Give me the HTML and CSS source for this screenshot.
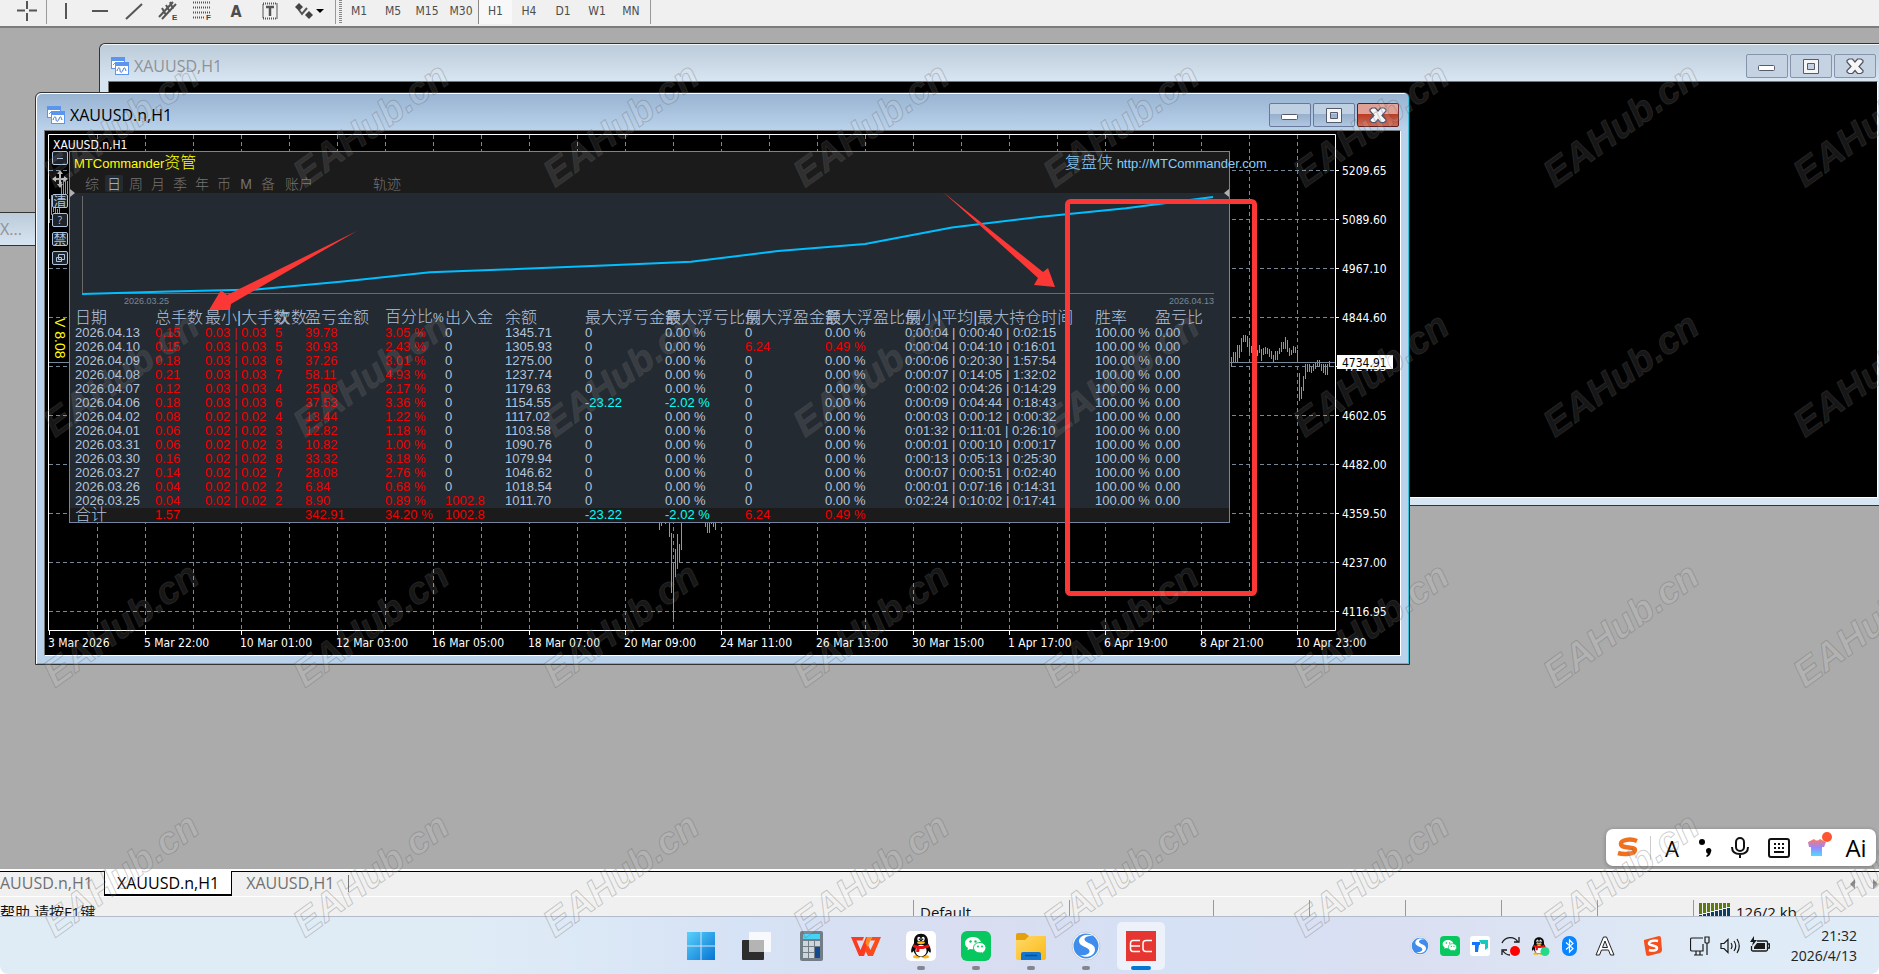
FILE: index.html
```html
<!DOCTYPE html>
<html lang="zh-CN">
<head>
    <meta charset="UTF-8">
    <meta name="viewport" content="width=device-width, initial-scale=1.0">
    <title>XAUUSD.n,H1</title>
    <link rel="stylesheet" href="styles.css">
</head>
<body>
    <svg width="0" height="0" class="defs">
        <defs>
            <symbol id="i-chart" viewBox="0 0 18 18">
                <rect x="0" y="0" width="14" height="12" fill="#5b95ee"/><rect x="1" y="4" width="12" height="7" fill="#fff"/>
                <path d="M2 8l2-2 2 2 2-2" fill="none" stroke="#5b95ee"/>
                <rect x="4" y="5" width="14" height="13" fill="#5b95ee"/><rect x="5" y="9" width="12" height="8" fill="#fff"/>
                <path d="M6 14c1-4 3-4 3-1s2 3 3 0 2-3 3 1" fill="none" stroke="#3b73c8"/>
            </symbol>
            <symbol id="i-min" viewBox="0 0 20 18"><rect x="1.500" y="8.500" width="16" height="5" rx="1" fill="#fff" stroke="#555b6d"/></symbol>
            <symbol id="i-max" viewBox="0 0 20 18"><path d="M2.500 2.500h15v14h-15z M6.500 6.500v6h7v-6z" fill="#f6f6f6" stroke="#555b6d" fill-rule="evenodd"/></symbol>
            <symbol id="i-close" viewBox="0 0 20 18"><path d="M2 3.500L4 2h3.500L10 5l2.500-3H16l2 1.500v1.500L14 9.500l4 4V15l-2 1.500h-3.500L10 13.500l-2.500 3H4L2 15v-1.500l4-4L2 5z" fill="#f6f6f6" stroke="#4d5265" stroke-width="1.200"/></symbol>
            <symbol id="i-wechat" viewBox="0 0 30 30">
                <rect width="30" height="30" rx="6" fill="#07c75f"/>
                <path d="M12 6c-4.500 0-8 2.700-8 6.200 0 2 1.200 3.700 3 4.800l-.6 2.200 2.700-1.300c4 1 11-.5 11-5.700C20 8.700 16.500 6 12 6z" fill="#fff"/>
                <path d="M19 11.500c-3.800 0-6.500 2.300-6.500 5.200 0 3.500 4 5.900 8.300 5l2.200 1.300-.5-2c1.600-1 2.500-2.500 2.500-4.300 0-2.900-2.600-5.200-6-5.200z" fill="#fff" stroke="#07c75f"/>
                <g fill="#07c75f"><circle cx="9.500" cy="10.500" r="1.200"/><circle cx="14.500" cy="10.500" r="1.200"/><circle cx="17" cy="15.500" r="1"/><circle cx="21" cy="15.500" r="1"/></g>
            </symbol>
            <symbol id="i-qq" viewBox="0 0 30 30">
                <ellipse cx="10.500" cy="26.500" rx="4" ry="1.800" fill="#fdb515"/><ellipse cx="19.500" cy="26.500" rx="4" ry="1.800" fill="#fdb515"/>
                <path d="M15 2c-5 0-7.500 3.500-7.500 8v2C5.500 15 4 18.500 4.500 21.500c.5 1.500 2-.5 2.500-1.500 1 4 4 6.500 8 6.500s7-2.500 8-6.500c.5 1 2 3 2.500 1.500.5-3-1-6.500-3-9.500v-2C22.500 5.500 20 2 15 2z" fill="#0b0b0b"/>
                <ellipse cx="15" cy="20" rx="6" ry="6.300" fill="#fff"/>
                <ellipse cx="12.700" cy="7.500" rx="1.700" ry="2.300" fill="#fff"/><ellipse cx="17.300" cy="7.500" rx="1.700" ry="2.300" fill="#fff"/>
                <circle cx="13.200" cy="7.800" r=".8"/><circle cx="16.800" cy="7.800" r=".8"/>
                <ellipse cx="15" cy="11.500" rx="4.200" ry="1.500" fill="#fdb515"/>
                <path d="M7 13c5 2.500 11 2.500 16 0l.8 3c-3.500 1.800-7 2.300-10.300 2.100l-.5 3.400H9.800l.3-4.100c-1.500-.4-2.800-.8-3.800-1.400z" fill="#e81010"/>
            </symbol>
            <symbol id="i-swirl" viewBox="0 0 30 30">
                <circle cx="15" cy="15" r="14" fill="#fff" stroke="#c7cbd5"/>
                <circle cx="15" cy="15" r="12.500" fill="#3e8cec"/>
                <path d="M22 5c-7-3.500-14.500.5-14 5.500.5 5.500 10 5 10.500 9.500.2 3-4.500 5-9.500 4 6 4 15 1 15-5.500C24 12 14 12.500 13.500 8.500 13.300 6 17 4.500 22 5z" fill="#fff"/>
            </symbol>
            <linearGradient id="g-win" x1="0" y1="0" x2="1" y2="1"><stop offset="0" stop-color="#5ad1fb"/><stop offset="1" stop-color="#0674d4"/></linearGradient>
            <linearGradient id="g-folder" x1="0" y1="0" x2="1" y2="1"><stop offset="0" stop-color="#ffd969"/><stop offset="1" stop-color="#fbb915"/></linearGradient>
            <linearGradient id="g-shirt" x1="0" y1="0" x2="0" y2="1"><stop offset="0" stop-color="#ff7a5c"/><stop offset=".5" stop-color="#9a86ff"/><stop offset="1" stop-color="#4fdcff"/></linearGradient>
        </defs>
    </svg>

    <header class="toolbar">
        <button class="tool" aria-label="crosshair"><svg width="20" height="20"><path d="M10 0v8M10 12v8M0 9.500h8M12 9.500h8"/></svg></button>
        <span class="split"></span>
        <button class="tool" aria-label="vertical line"><svg width="20" height="20"><path d="M10 2v16"/></svg></button>
        <button class="tool" aria-label="horizontal line"><svg width="20" height="20"><path d="M2 10h16"/></svg></button>
        <button class="tool" aria-label="trendline"><svg width="20" height="20"><path d="M2 18L18 3"/></svg></button>
        <button class="tool" aria-label="channel"><svg width="20" height="20"><path d="M1 16L15 1M4 18L18 3M4 7l4 7M8 4l4 7M12 1l3 7"/><text x="14" y="19">E</text></svg></button>
        <button class="tool" aria-label="fibonacci"><svg width="20" height="20"><path d="M1 1.500h17M1 6.500h17M1 11.500h17M1 16.500h11" stroke-dasharray="1 1"/><text x="14" y="19">F</text></svg></button>
        <button class="tool letter" aria-label="text">A</button>
        <button class="tool" aria-label="text label"><svg width="20" height="20"><rect x="3" y="2.500" width="14" height="15" stroke-dasharray="1 1"/><path d="M6 6h8M10 6v9" stroke-width="2.500"/></svg></button>
        <button class="tool wide" aria-label="arrows"><svg width="32" height="20"><path d="M1 6l4-4 4 4-4 4zM11 14l4-4 4 4-4 4z" fill="#444" stroke="none"/><path d="M5 9l3 4 5-6"/><path d="M22 8h8l-4 4z" fill="#000" stroke="none"/></svg></button>
        <span class="split"></span>
        <span class="grip"></span>
        <nav class="periods">
            <button>M1</button><button>M5</button><button>M15</button><button>M30</button><button class="on">H1</button><button>H4</button><button>D1</button><button>W1</button><button>MN</button>
        </nav>
        <span class="split"></span>
    </header>

    <main class="workspace">
        <section class="window stub"><div class="titlebar"><span>X...</span></div></section>

        <section class="window back">
            <div class="titlebar">
                <svg class="app-icon"><use href="#i-chart"/></svg>
                <h2>XAUUSD,H1</h2>
                <button class="ctl" aria-label="minimize"><svg><use href="#i-min"/></svg></button>
                <button class="ctl" aria-label="maximize"><svg><use href="#i-max"/></svg></button>
                <button class="ctl" aria-label="close"><svg><use href="#i-close"/></svg></button>
            </div>
            <div class="client"></div>
        </section>

        <section class="window front">
            <div class="titlebar">
                <svg class="app-icon"><use href="#i-chart"/></svg>
                <h2>XAUUSD.n,H1</h2>
                <button class="ctl" aria-label="minimize"><svg><use href="#i-min"/></svg></button>
                <button class="ctl" aria-label="maximize"><svg><use href="#i-max"/></svg></button>
                <button class="ctl close" aria-label="close"><svg><use href="#i-close"/></svg></button>
            </div>
            <div class="client">
                <svg class="chart" viewBox="45 131 1355 524" id="chart">
                    <g id="grid" class="grid"></g>
                    <path id="bars" class="bars"/>
                    <path d="M49 362.500H1336" class="price-line"/>
                    <path d="M48.500 630.500V134.500H1335.500V630.500Z" class="frame"/>
                    <g id="axis" class="axis"></g>
                    <text x="53" y="149" class="axis">XAUUSD.n,H1</text>
                </svg>

                <div class="side">
                    <button aria-label="collapse"><svg width="14" height="12"><path d="M4 6.500h6"/></svg></button>
                    <span class="move"><svg width="16" height="18"><path d="M8 0l3 4H5zM8 18l3-4H5zM0 9l4-3v6zM16 9l-4-3v6z" fill="#bbb"/><path d="M8 3v12M3 9h10" stroke="#bbb" stroke-width="2"/></svg></span>
                    <button>清</button>
                    <button class="q">?</button>
                    <button>禁</button>
                    <button aria-label="windows"><svg width="14" height="12"><path d="M5.500 2.500h6v5h-6zM3.500 5.500h5v4h-5z"/></svg></button>
                </div>
                <span class="version">V 8.08</span>

                <div class="panel">
                    <div class="panel-head">
                        <div class="panel-title">
                            <strong>MTCommander<i>资管</i></strong>
                            <span class="brand"><i>复盘侠</i> <a href="#">http://MTCommander.com</a></span>
                        </div>
                        <nav class="panel-tabs">
                            <button>综</button><button class="on">日</button><button>周</button><button>月</button><button>季</button><button>年</button><button>币</button><button>M</button><button>备</button><button class="two">账户</button><button class="two track">轨迹</button>
                        </nav>
                    </div>
                    <svg class="equity" viewBox="70 193 1159 116">
                        <path d="M82.500 196V293.500H1214" class="eq-axis"/>
                        <path id="curve" class="curve"/>
                        <path d="M70 189l5 4-5 4zM1229 189l-5 4 5 4z" fill="#b0b0b0"/>
                        <text x="124" y="304">2026.03.25</text>
                        <text x="1169" y="304">2026.04.13</text>
                    </svg>
                    <table class="report">
                        <colgroup>
                            <col class="w80"><col class="w50"><col class="w70"><col class="w30"><col class="w80"><col class="w60"><col class="w60"><col class="w80"><col class="w80"><col class="w80"><col class="w80"><col class="w80"><col class="w190"><col class="w60"><col class="w74">
                        </colgroup>
                        <thead>
                            <tr><th>日期</th><th>总手数</th><th>最小|大手数</th><th>次数</th><th>盈亏金额</th><th>百分比<small>%</small></th><th>出入金</th><th>余额</th><th>最大浮亏金额</th><th>最大浮亏比例</th><th>最大浮盈金额</th><th>最大浮盈比例</th><th>最小|平均|最大持仓时间</th><th>胜率</th><th>盈亏比</th></tr>
                        </thead>
                        <tbody id="rows"></tbody>
                        <tfoot>
                            <tr><td class="cjk">合计</td><td class="up">1.57</td><td></td><td></td><td class="up">342.91</td><td class="up">34.20 %</td><td class="up">1002.8</td><td></td><td class="down">-23.22</td><td class="down">-2.02 %</td><td class="up">6.24</td><td class="up">0.49 %</td><td></td><td></td><td></td></tr>
                        </tfoot>
                    </table>
                </div>
            </div>
        </section>
    </main>

    <nav class="doc-tabs">
        <button class="cut">AUUSD.n,H1</button>
        <button class="on">XAUUSD.n,H1</button>
        <button>XAUUSD,H1</button>
        <span class="end"></span>
        <svg class="scroll" width="30" height="10"><path d="M6 0v10L1 5zM24 0v10l5-5z" fill="#8a8a8a"/></svg>
    </nav>

    <div class="status">
        <span class="help">帮助,请按F1键</span>
        <span class="cell profile">Default</span>
        <span class="cell wide"></span>
        <span class="cell"></span>
        <span class="cell"></span>
        <span class="cell"></span>
        <span class="cell"></span>
        <span class="cell"></span>
        <span class="cell net"><svg width="32" height="14" id="signal"></svg>126/2 kb</span>
    </div>

    <footer class="taskbar">
        <div class="apps">
            <button aria-label="Start"><svg viewBox="0 0 30 30"><path d="M1 1h13.500v13.500H1zM15.500 1H29v13.500H15.500zM1 15.500h13.500V29H1zM15.500 15.500H29V29H15.500z" fill="url(#g-win)"/></svg></button>
            <button aria-label="Task view"><svg viewBox="0 0 30 30"><rect x="1" y="9" width="22" height="20" rx="1" fill="#2d2d2d"/><rect x="8" y="1" width="22" height="20" rx="1" fill="#fff" opacity=".8"/><rect x="8" y="9" width="15" height="12" fill="#b4b4b4"/></svg></button>
            <button aria-label="Calculator"><svg viewBox="0 0 30 30"><rect x="4" width="23" height="30" rx="2" fill="#717d87"/><rect x="7" y="3" width="17" height="5" fill="#44d3f6"/><path d="M7 10h5v5H7zM13 10h5v5h-5zM19 10h5v5h-5zM7 16h5v5H7zM13 16h5v5h-5zM7 22h5v5H7zM13 22h5v5h-5z" fill="#cfd5db"/><path d="M19 16h5v11h-5z" fill="#134a8e"/></svg></button>
            <button aria-label="WPS"><svg viewBox="0 0 30 30"><path d="M0 6h13l-1.500 3.500H5.500L9.500 19 15 6h5l-7 19H8z" fill="#fb3a22"/><path d="M16 12l3.500 7L24 9.500h-4.500L21 6h9l-8 19h-5l-3-6z" fill="#fb4a1c"/><path d="M16 6h5l-4.500 10-2-4z" fill="#ff8a1e"/></svg></button>
            <button aria-label="QQ" class="run"><svg viewBox="0 0 30 30"><rect width="30" height="30" rx="5" fill="#fff"/><use href="#i-qq" x="1" y="1" width="28" height="28"/></svg></button>
            <button aria-label="WeChat" class="run"><svg viewBox="0 0 30 30"><use href="#i-wechat"/></svg></button>
            <button aria-label="Explorer" class="run"><svg viewBox="0 0 30 30"><path d="M0 4a2 2 0 012-2h7l4 3v5H0z" fill="#e2a10d"/><path d="M0 9h9l4-4h17v22a2 2 0 01-2 2H2a2 2 0 01-2-2z" fill="url(#g-folder)"/><path d="M5 29v-6a2 2 0 012-2h16a2 2 0 012 2v6z" fill="#1475cd"/><path d="M9 24.500h12" stroke="#0b4c8e" stroke-width="1.500"/></svg></button>
            <button aria-label="Browser" class="run"><svg viewBox="0 0 30 30"><use href="#i-swirl"/></svg></button>
            <button aria-label="EC" class="run on"><svg viewBox="0 0 30 30"><rect width="30" height="30" fill="#e53631"/><path d="M14 9.500H7q-2.500 0-2.500 3v5q0 3 2.500 3h7M5 15h9M26 9.500h-6q-3 0-3 3v5q0 3 3 3h6" fill="none" stroke="#fff" stroke-width="1.500"/></svg></button>
        </div>
        <div class="tray">
            <svg viewBox="0 0 30 30"><use href="#i-swirl"/></svg>
            <svg viewBox="0 0 30 30"><use href="#i-wechat"/></svg>
            <svg viewBox="0 0 20 20"><rect width="20" height="20" rx="3" fill="#fff"/><path d="M2 6h8v3H9l-1 7H5V9H2z" fill="#1573ff"/><path d="M9 4h9v8l-3 2V8h-4z" fill="#18c9c2"/></svg>
            <svg viewBox="0 0 20 20"><path d="M2 7a9 9 0 0116-1M19 1v5h-5M2 19v-5h5M3 15a9 9 0 007 4" fill="none" stroke="#1a1a1a" stroke-width="1.300"/><circle cx="15" cy="15" r="5" fill="#f00"/></svg>
            <svg viewBox="0 0 20 20"><use href="#i-qq" x="-1" y="0" width="20" height="20"/><circle cx="15" cy="15.500" r="4.500" fill="#25d987"/></svg>
            <svg viewBox="0 0 20 20"><rect x="2" width="15" height="20" rx="7" fill="#0a84ff"/><path d="M6 6.500l7 6-3.500 3.500V4L13 7.500l-7 6" fill="none" stroke="#fff" stroke-width="1.200"/></svg>
            <svg viewBox="0 0 20 20" class="ime"><path d="M1 19L8.500 1h3L19 19h-3.500l-2-5h-7l-2 5zM7.500 11.500h5L10 5z" fill="#fff" stroke="#222"/></svg>
            <svg viewBox="0 0 20 20" class="sogou"><path d="M1 4l15-4q2 0 2 2l1 12q0 2-2 3L5 20q-2 0-2-2L1 6z" fill="#f4511e"/><path d="M15 5c-4-1-9 0-9 2.500S14 9 14 12s-5 3-8 2" fill="none" stroke="#fff" stroke-width="2.500"/></svg>
            <svg viewBox="0 0 20 20"><path d="M13 2H2q-1.500 0-1.500 1.500v10Q.5 15 2 15h11V8M4 19h9M6 15v4M10 15v4M15 1v5q0 1 1 1h2q1 0 1-1V1zM17 7v12" fill="none" stroke="#1a1a1a" stroke-width="1.200"/></svg>
            <svg viewBox="0 0 20 20"><path d="M1 7.500h3l4-4v13l-4-4H1zM11 7q2 3 0 6M14 5q3.500 5 0 10M17 3q4.500 7 0 14" fill="none" stroke="#1a1a1a" stroke-width="1.200"/></svg>
            <svg viewBox="0 0 20 20"><path d="M7 5h9q1.500 0 1.500 1.500v7q0 1.500-1.500 1.500H3q-1.500 0-1.500-1.500V10M18 8h1.500v4H18" fill="none" stroke="#1a1a1a" stroke-width="1.300"/><path d="M7 7h8v6H4v-2zM4 0L0 6h3l-1 4 5-6H4z" fill="#1a1a1a"/></svg>
            <time>21:32<br>2026/4/13</time>
        </div>
    </footer>

    <div class="ime-bar">
        <svg width="24" height="22" class="s"><path d="M21 4c-7-3-16-1-16 3 0 5 14 2 14 6 0 4-11 5-17 3" fill="none" stroke="#f0701e" stroke-width="4.500"/></svg>
        <span class="rule"></span>
        <button class="a">A</button>
        <button aria-label="punctuation"><svg width="14" height="20"><circle cx="3" cy="4" r="3"/><path d="M7 13a2.700 2.700 0 115 1q-1 4-4 5l-1-1 2-2q-2-1-2-3z"/></svg></button>
        <button aria-label="voice"><svg width="20" height="22"><rect x="6" y="1" width="8" height="13" rx="4" class="ln"/><path d="M2 10q0 7 8 7t8-7M10 17v4" class="ln"/></svg></button>
        <button class="kb" aria-label="keyboard"><svg width="22" height="20"><rect x="1" y="1" width="20" height="18" rx="2" class="ln"/><path d="M6 6h2M10 6h2M14 6h2M6 10h2M10 10h2M14 10h2M6 14h10" class="ln"/></svg></button>
        <button class="skin" aria-label="skin"><svg width="26" height="26"><path d="M1 10l6-3q3 3 6 0l6 3-2 5h-2v9H4v-9H2z" fill="url(#g-shirt)"/><circle cx="20" cy="5" r="5" fill="#ff5530"/></svg></button>
        <button class="ai">Ai</button>
    </div>

    <svg class="marks">
        <rect x="1067.500" y="201.500" width="187" height="392" rx="3"/>
        <path d="M209 310L221 290L227 295L357 231L231 304L230 310Z"/>
        <path d="M1055 287L1048 268L1043 272L943 192L1038 278L1034 285Z"/>
    </svg>
    <div class="watermark" id="watermark" aria-hidden="true"></div>

    <script src="script.js"></script>
</body>
</html>
```
FILE: styles.css
```css
* {
    margin: 0;
    padding: 0;
    box-sizing: border-box;
}
body {
    position: relative;
    display: flex;
    flex-direction: column;
    height: 100vh;
    overflow: hidden;
    background: #fff;
    font-family: "Open Sans", "Noto Sans CJK SC", sans-serif;
    font-size: 16px;
}
button {
    border: none;
    background: none;
    font: inherit;
    color: inherit;
}
i {
    font-style: normal;
}
.defs {
    position: absolute;
}

/* toolbar */
.toolbar {
    flex: none;
    display: flex;
    height: 28px;
    padding-left: 10px;
    background: #f0f0f0;
    border-bottom: 2px solid #7c7c7c;
    color: #4d4d4d;
    font: 12px "DejaVu Sans Condensed", "DejaVu Sans", sans-serif;
}
.tool {
    width: 34px;
    height: 22px;
    display: flex;
    align-items: center;
    justify-content: center;
}
.tool svg {
    fill: none;
    stroke: #555;
    stroke-width: 2;
}
.tool text {
    fill: #444;
    stroke: none;
    font: bold 8px "Liberation Sans", sans-serif;
}
.tool.letter {
    font-weight: bold;
    font-size: 16px;
}
.tool.wide {
    width: 46px;
}
.split {
    width: 1px;
    height: 24px;
    margin: 0 2px;
    background: #999;
}
.grip {
    width: 3px;
    height: 24px;
    margin-left: 1px;
    background: repeating-linear-gradient(#888 0 1px, #f0f0f0 1px 2px);
}
.periods {
    display: flex;
}
.periods button {
    width: 34px;
    height: 24px;
    padding-bottom: 3px;
    white-space: nowrap;
}
.periods .on {
    background: #f8f8f8;
    border-left: 1px solid #888;
}

/* mdi windows */
.workspace {
    position: relative;
    flex: 1;
    overflow: hidden;
    background: #ababab;
}
.window {
    position: absolute;
    display: flex;
    flex-direction: column;
    border: 1px solid #333;
    border-radius: 6px 6px 0 0;
    padding: 0 7px 7px;
    background: #d7e4f1;
}
.titlebar {
    flex: none;
    display: flex;
    align-items: center;
    height: 37px;
    gap: 2px;
    padding: 0 2px 0 3px;
}
.titlebar h2 {
    flex: 1;
    padding: 7px 0 0 3px;
    font-size: 16px;
    font-weight: normal;
}
.app-icon {
    width: 18px;
    height: 18px;
    margin-top: 6px;
}
.ctl {
    display: flex;
    align-items: center;
    justify-content: center;
    width: 42px;
    height: 24px;
    margin-top: 6px;
    border: 1px solid #8593ad;
    border-radius: 2px;
    background: #c5d2e2;
}
.ctl svg {
    width: 20px;
    height: 18px;
}
.client {
    position: relative;
    flex: 1;
    border: 1px solid #777;
    border-right-color: #fff;
    border-bottom-color: #fff;
    background: #000;
}
.back {
    left: 99px;
    right: 0;
    top: 15px;
    height: 463px;
    padding: 0 1px 7px 8px;
    border-top-right-radius: 0;
    border-right: none;
    background: linear-gradient(#bccbd9, #d7e4f1 36px);
    box-shadow: inset 0 1px #f2f6fa;
    color: #8e9297;
}
.stub {
    left: -8px;
    top: 184px;
    width: 60px;
    height: 34px;
    padding: 0 7px;
    border-radius: 0;
    background: linear-gradient(#bccbd9, #d7e4f1);
    color: #8e9297;
}
.stub .titlebar {
    height: 32px;
    padding-left: 0;
}
.front {
    left: 35px;
    top: 64px;
    width: 1375px;
    height: 573px;
    padding: 0 8px 8px;
    background: linear-gradient(#98b3d1, #b9d1ea 36px);
    box-shadow: inset 1px 1px #fff, inset -1px -1px #3fc4de;
    color: #000;
}
.front .ctl {
    border-color: #66799a;
    background: linear-gradient(#c0d0e3 45%, #98b0cd 46%, #b0c6e0);
}
.front .close {
    border-color: #5e1d1d;
    background: linear-gradient(#e0a095 45%, #b93c26 46%, #cf6b55);
}

/* chart */
.chart {
    display: block;
    width: 1355px;
    height: 524px;
}
.grid {
    stroke: #778899;
    stroke-dasharray: 4 3;
}
.bars {
    stroke: #00ff00;
}
.price-line {
    stroke: #778899;
}
.frame {
    fill: none;
    stroke: #fff;
}
.axis {
    fill: #fff;
    font: 12px "DejaVu Sans Condensed", "DejaVu Sans", sans-serif;
}
.axis path {
    stroke: #fff;
}
.axis .now {
    fill: #000;
}
.side {
    position: absolute;
    left: 7px;
    top: 20px;
    display: flex;
    flex-direction: column;
    gap: 5px;
    color: #b0c4de;
}
.side button {
    display: flex;
    align-items: center;
    justify-content: center;
    width: 16px;
    height: 14px;
    border: 1px solid #b0c4de;
    border-radius: 2px;
    background: #1e242b;
    font-size: 13px;
    line-height: 12px;
}
.side .q {
    font-size: 10px;
}
.side button svg {
    fill: none;
    stroke: #b0c4de;
}
.side .move {
    height: 19px;
}
.version {
    position: absolute;
    left: 7px;
    top: 187px;
    writing-mode: vertical-rl;
    color: #ffff00;
    font: 14px/16px "Liberation Sans", sans-serif;
}

/* report panel */
.panel {
    position: absolute;
    left: 24px;
    top: 20px;
    width: 1161px;
    border: 1px solid #76859f;
    background: #242a31;
    color: #b0c4de;
    font: 13px "Liberation Sans", "Noto Sans CJK SC", sans-serif;
}
.panel i {
    font-size: 16px;
    font-weight: 300;
}
.panel-head {
    height: 41px;
    background: #1b1b1b;
}
.panel-title {
    display: flex;
    height: 23px;
    padding-left: 4px;
    line-height: 22px;
    white-space: nowrap;
}
.panel-title strong {
    flex: 1;
    color: #ffff00;
    font-weight: normal;
}
.brand {
    width: 164px;
    color: #87cefa;
}
.brand a {
    color: inherit;
    text-decoration: none;
}
.panel-tabs {
    display: flex;
    gap: 4px;
    padding-left: 13px;
    color: #747474;
}
.panel-tabs button {
    width: 18px;
    height: 17px;
    line-height: 16px;
    font-size: 14px;
    font-weight: 300;
    border-radius: 2px;
    white-space: nowrap;
}
.panel-tabs .on {
    background: #242a31;
    color: #b0c4de;
}
.panel-tabs .two {
    width: 36px;
}
.panel-tabs .track {
    margin-left: 48px;
}
.equity {
    display: block;
    width: 1159px;
    height: 116px;
    fill: none;
    overflow: visible;
}
.equity text {
    fill: #778899;
    font-size: 9px;
}
.eq-axis {
    stroke: #696969;
}
.curve {
    stroke: #00bfff;
    stroke-width: 2;
}
.report {
    width: 1159px;
    table-layout: fixed;
    border-collapse: collapse;
    white-space: nowrap;
}
.report th,
.report td {
    height: 14px;
    line-height: 14px;
    text-align: left;
    font-weight: normal;
}
.report th {
    height: 16px;
    line-height: 16px;
    font-size: 16px;
    font-weight: 300;
}
.report th small {
    font-size: 12px;
}
.report th:first-child,
.report td:first-child {
    padding-left: 5px;
}
.report tfoot td {
    background: #1b1b1b;
}
.report .cjk {
    font-size: 16px;
    font-weight: 300;
}
.report .up {
    color: #f00000;
}
.report .down {
    color: #00ffff;
}
.w30 { width: 30px; }
.w50 { width: 50px; }
.w60 { width: 60px; }
.w70 { width: 70px; }
.w74 { width: 74px; }
.w80 { width: 80px; }
.w80:first-child { width: 85px; }
.w190 { width: 190px; }

/* document tabs and status bar */
.doc-tabs {
    flex: none;
    display: flex;
    align-items: center;
    height: 28px;
    border-top: 2px solid #fff;
    border-bottom: 1px solid #fff;
    background: linear-gradient(#000 1px, #f0f0f0 1px);
    color: #707070;
}
.doc-tabs button {
    height: 25px;
    padding: 0 14px 2px;
    white-space: nowrap;
}
.doc-tabs .cut {
    width: 104px;
    padding-left: 0;
    text-align: left;
}
.doc-tabs .on {
    border: 1px solid #000;
    border-bottom-width: 2px;
    border-top: none;
    background: #fff;
    color: #000;
    padding: 0 12px;
}
.doc-tabs .end {
    width: 1px;
    height: 17px;
    background: #777;
}
.scroll {
    margin-left: auto;
}
.status {
    flex: none;
    display: flex;
    height: 19px;
    overflow: hidden;
    background: #f0f0f0;
    color: #111;
    line-height: 30px;
    font-size: 15px;
    white-space: nowrap;
}
.help {
    flex: 1;
}
.cell {
    width: 96px;
    height: 19px;
    margin-top: 3px;
    border-left: 1px solid #999;
    line-height: 24px;
}
.profile {
    width: 156px;
    padding-left: 6px;
}
.cell.wide {
    width: 144px;
}
.net {
    display: flex;
    width: 186px;
    gap: 5px;
    padding-left: 5px;
}
.net svg {
    margin-top: 3px;
}

/* taskbar */
.taskbar {
    flex: none;
    display: flex;
    align-items: center;
    height: 58px;
    padding: 0 22px 0 calc(50% - 263px);
    border-top: 1px solid #b3bccb;
    border-radius: 0 0 8px 8px;
    background: linear-gradient(90deg, #dfecf6 25%, #d6e2f5 40%, #d9ddf1 52%, #d5e1f5 62%, #dadff1 75%, #dfebf6 92%);
}
.apps {
    display: flex;
    gap: 7px;
}
.apps button {
    position: relative;
    width: 48px;
    height: 48px;
    border-radius: 5px;
}
.apps svg {
    display: block;
    width: 30px;
    height: 30px;
    margin: 0 auto;
}
.apps .on {
    background: #edf1fa;
}
.apps .run::after {
    content: "";
    position: absolute;
    left: 20px;
    bottom: 0;
    width: 8px;
    height: 4px;
    border-radius: 2px;
    background: #83868f;
}
.apps .on::after {
    left: 14px;
    width: 20px;
    background: #0078d4;
}
.tray {
    display: flex;
    align-items: center;
    gap: 10px;
    margin-left: auto;
}
.tray svg {
    width: 20px;
    height: 20px;
}
.tray .ime {
    margin-left: 5px;
}
.tray .sogou {
    margin: 0 17px 0 18px;
}
.tray time {
    width: 77px;
    text-align: right;
    font-size: 14px;
    line-height: 20px;
    color: #222;
}

/* input method bar */
.ime-bar {
    position: absolute;
    right: 3px;
    bottom: 108px;
    display: flex;
    align-items: center;
    width: 270px;
    height: 37px;
    padding-left: 10px;
    border-radius: 7px;
    background: #fff;
    box-shadow: 0 1px 4px rgba(0, 0, 0, 0.3);
}
.ime-bar button {
    display: flex;
    align-items: center;
    justify-content: center;
    width: 34px;
    height: 37px;
    font-size: 22px;
}
.ime-bar .rule {
    width: 1px;
    height: 24px;
    margin-left: 10px;
    margin-right: 4px;
    background: #ccc;
}
.ime-bar .kb {
    width: 44px;
}
.ime-bar .skin {
    width: 38px;
    padding-bottom: 6px;
}
.ime-bar .ai {
    font-size: 24px;
}
.ime-bar .ln {
    fill: none;
    stroke: #111;
    stroke-width: 2;
}

/* overlays */
.marks {
    position: absolute;
    left: 0;
    top: 0;
    width: 100%;
    height: 100%;
    pointer-events: none;
    fill: #fb3836;
}
.marks rect {
    fill: none;
    stroke: #fb3836;
    stroke-width: 5;
}
.watermark {
    position: absolute;
    inset: 0;
    overflow: hidden;
    display: grid;
    grid-template-columns: repeat(8, 250px);
    grid-auto-rows: 250px;
    pointer-events: none;
}
.watermark span {
    display: grid;
    place-items: center;
    padding: 0 6px 6px 0;
    color: rgba(255, 255, 255, 0.1);
    font: italic bold 38px "Liberation Sans", sans-serif;
    -webkit-text-stroke: 1px rgba(90, 90, 90, 0.3);
    transform: rotate(-36deg);
}
```
FILE: script.js
```javascript
// date, lots, min/max lots, count, profit, percent, in/out, balance, dd, dd%, up, up%, holding time
const days = [
    ['2026.04.13', '0.15', '0.03 | 0.03', '5', '39.78', '3.05 %', '0', '1345.71', '0', '0.00 %', '0', '0.00 %', '0:00:04 | 0:00:40 | 0:02:15'],
    ['2026.04.10', '0.15', '0.03 | 0.03', '5', '30.93', '2.43 %', '0', '1305.93', '0', '0.00 %', '6.24', '0.49 %', '0:00:04 | 0:04:10 | 0:16:01'],
    ['2026.04.09', '0.18', '0.03 | 0.03', '6', '37.26', '3.01 %', '0', '1275.00', '0', '0.00 %', '0', '0.00 %', '0:00:06 | 0:20:30 | 1:57:54'],
    ['2026.04.08', '0.21', '0.03 | 0.03', '7', '58.11', '4.93 %', '0', '1237.74', '0', '0.00 %', '0', '0.00 %', '0:00:07 | 0:14:05 | 1:32:02'],
    ['2026.04.07', '0.12', '0.03 | 0.03', '4', '25.08', '2.17 %', '0', '1179.63', '0', '0.00 %', '0', '0.00 %', '0:00:02 | 0:04:26 | 0:14:29'],
    ['2026.04.06', '0.18', '0.03 | 0.03', '6', '37.53', '3.36 %', '0', '1154.55', '-23.22', '-2.02 %', '0', '0.00 %', '0:00:09 | 0:04:44 | 0:18:43'],
    ['2026.04.02', '0.08', '0.02 | 0.02', '4', '13.44', '1.22 %', '0', '1117.02', '0', '0.00 %', '0', '0.00 %', '0:00:03 | 0:00:12 | 0:00:32'],
    ['2026.04.01', '0.06', '0.02 | 0.02', '3', '12.82', '1.18 %', '0', '1103.58', '0', '0.00 %', '0', '0.00 %', '0:01:32 | 0:11:01 | 0:26:10'],
    ['2026.03.31', '0.06', '0.02 | 0.02', '3', '10.82', '1.00 %', '0', '1090.76', '0', '0.00 %', '0', '0.00 %', '0:00:01 | 0:00:10 | 0:00:17'],
    ['2026.03.30', '0.16', '0.02 | 0.02', '8', '33.32', '3.18 %', '0', '1079.94', '0', '0.00 %', '0', '0.00 %', '0:00:13 | 0:05:13 | 0:25:30'],
    ['2026.03.27', '0.14', '0.02 | 0.02', '7', '28.08', '2.76 %', '0', '1046.62', '0', '0.00 %', '0', '0.00 %', '0:00:07 | 0:00:51 | 0:02:40'],
    ['2026.03.26', '0.04', '0.02 | 0.02', '2', '6.84', '0.68 %', '0', '1018.54', '0', '0.00 %', '0', '0.00 %', '0:00:01 | 0:07:16 | 0:14:31'],
    ['2026.03.25', '0.04', '0.02 | 0.02', '2', '8.90', '0.89 %', '1002.8', '1011.70', '0', '0.00 %', '0', '0.00 %', '0:02:24 | 0:10:02 | 0:17:41']
];

function cellClass(value, col) {
    if (col === 0 || col === 7 || col === 12) return '';
    const n = parseFloat(value);
    return n < 0 ? 'down' : n > 0 ? 'up' : '';
}

document.getElementById('rows').innerHTML = days.map(row =>
    '<tr>' + row.map((v, i) => `<td class="${cellClass(v, i)}">${v}</td>`).join('') +
    '<td>100.00 %</td><td>0.00</td></tr>').join('');

// equity curve
const equity = [1002.8].concat(days.map(d => +d[7]).reverse());
document.getElementById('curve').setAttribute('d', 'M' + equity.map((b, i) =>
    `${82 + i * 87} ${(294 - (b - 1002.8) / 342.91 * 97).toFixed(1)}`).join('L'));

// grid, prices and times
const prices = ['5209.65', '5089.60', '4967.10', '4844.60', '4724.55', '4602.05', '4482.00', '4359.50', '4237.00', '4116.95'];
const times = ['3 Mar 2026', '5 Mar 22:00', '10 Mar 01:00', '12 Mar 03:00', '16 Mar 05:00', '18 Mar 07:00', '20 Mar 09:00',
    '24 Mar 11:00', '26 Mar 13:00', '30 Mar 15:00', '1 Apr 17:00', '6 Apr 19:00', '8 Apr 21:00', '10 Apr 23:00'];
let grid = '';
let axis = '';
for (let x = 97.5; x < 1335; x += 48) grid += `<path d="M${x} 135V630"/>`;
prices.forEach((p, i) => {
    const y = 170.5 + i * 49;
    grid += `<path d="M49 ${y}H1335"/>`;
    axis += `<path d="M1336 ${y}h3"/><text x="1342" y="${y + 4.5}">${p}</text>`;
});
times.forEach((t, i) => {
    axis += `<path d="M${49.5 + i * 96} 631v4"/><text x="${48 + i * 96}" y="647">${t}</text>`;
});
axis += '<rect x="1337" y="355" width="56" height="14"/><text class="now" x="1342" y="367">4734.91</text>';
document.getElementById('grid').innerHTML = grid;
document.getElementById('axis').innerHTML = axis;

// price bars: x, high, low
const bars = [
    [49, 199, 223], [51, 195, 215], [53, 197, 212], [55, 208, 213], [57, 209, 214], [59, 207, 213],
    [61, 182, 194], [63, 178, 194], [65, 180, 194], [67, 181, 194],
    [659, 521, 530], [661, 521, 526], [665, 521, 524], [669, 521, 537], [671, 533, 593], [673, 564, 619], [675, 549, 577], [677, 534, 569],
    [679, 544, 562], [681, 521, 550], [683, 521, 523], [705, 521, 527], [707, 521, 533], [709, 521, 533], [711, 521, 524], [713, 521, 527], [715, 521, 530]
];
const recent = [[357, 367], [352, 362], [352, 363], [345, 362], [345, 358], [338, 352], [335, 342], [335, 342], [336, 347], [342, 352],
    [346, 353], [346, 355], [348, 356], [350, 356], [345, 353], [349, 361], [348, 355], [347, 354], [348, 354], [349, 357], [351, 359],
    [355, 363], [351, 360], [351, 360], [348, 354], [342, 352], [342, 349], [337, 349], [340, 352], [348, 356], [350, 355], [346, 353],
    [347, 353], [350, 360], [373, 401], [387, 399], [376, 391], [364, 379], [364, 372], [364, 372], [367, 373], [364, 371], [363, 369],
    [360, 367], [360, 367], [364, 371], [364, 373], [364, 375], [364, 375], [361, 367]];
recent.forEach((r, i) => bars.push([1231 + i * 2, r[0], r[1]]));
document.getElementById('bars').setAttribute('d', bars.map(b => `M${b[0]}.5 ${b[1]}V${b[2]}`).join(''));

// connection indicator
let signal = '';
for (let i = 0; i < 8; i++) {
    signal += `<rect x="${i * 4}" y="0" width="3" height="${11 - i}" fill="#5d7a10"/><rect x="${i * 4}" y="${12 - i}" width="3" height="14" fill="#0d3f66"/>`;
}
document.getElementById('signal').innerHTML = signal;

document.getElementById('watermark').innerHTML = '<span>EAHub.cn</span>'.repeat(32);
```
